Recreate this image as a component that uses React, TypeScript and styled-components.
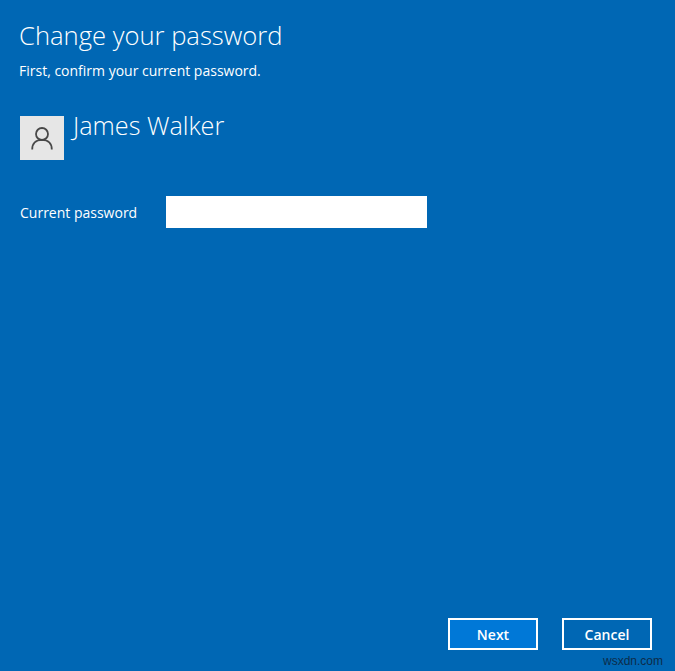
import { createGlobalStyle } from 'styled-components';
import styled from 'styled-components';

const GlobalStyle = createGlobalStyle`
  html, body {
    margin: 0;
    padding: 0;
    background: #0067b4;
  }
`;

export default function App(): JSX.Element {
  return (
    <>
      <GlobalStyle />
      <Page>
        <Title>Change your password</Title>
        <Subtitle>First, confirm your current password.</Subtitle>
        <UserRow>
          <Avatar>
            <svg width="24" height="24" viewBox="0 0 24 24" fill="none" stroke="#484848" strokeWidth="1.8">
              <circle cx="12" cy="8" r="6" />
              <path d="M2.2 23.4c0-5.8 3.6-9.6 9.8-9.6s9.8 3.8 9.8 9.6" />
            </svg>
          </Avatar>
          <UserName>James Walker</UserName>
        </UserRow>
        <FieldRow>
          <FieldLabel>Current password</FieldLabel>
          <PasswordInput type="password" />
        </FieldRow>
        <Footer>
          <ActionButton primary>Next</ActionButton>
          <ActionButton>Cancel</ActionButton>
        </Footer>
        <Watermark>wsxdn.com</Watermark>
      </Page>
    </>
  );
}

const Page = styled.div`
  position: relative;
  box-sizing: border-box;
  width: 675px;
  height: 671px;
  padding: 18px 23px 21px 20px;
  display: flex;
  flex-direction: column;
  overflow: hidden;
  background: #0067b4;
  color: #ffffff;
  font-family: "Open Sans", "Noto Sans", sans-serif;
`;
const Title = styled.h1`
  margin: 0 0 0 -1px;
  height: 36px;
  font-size: 25.6px;
  line-height: 36px;
  font-weight: 300;
  white-space: nowrap;
`;
const Subtitle = styled.p`
  margin: 8px 0 0 -1px;
  height: 18px;
  font-size: 14px;
  line-height: 18px;
  font-weight: 400;
`;
const UserRow = styled.div`
  display: flex;
  align-items: flex-start;
  gap: 9px;
  margin-top: 36px;
`;
const Avatar = styled.div`
  width: 44px;
  height: 44px;
  display: flex;
  align-items: center;
  justify-content: center;
  background: #e6e6e6;
`;
const UserName = styled.div`
  margin-top: -8px;
  font-size: 25.2px;
  line-height: 34px;
  font-weight: 300;
`;
const FieldRow = styled.div`
  display: flex;
  align-items: center;
  margin-top: 36px;
`;
const FieldLabel = styled.label`
  width: 146px;
  padding-top: 2px;
  font-size: 14px;
  line-height: 20px;
`;
const PasswordInput = styled.input`
  box-sizing: border-box;
  width: 261px;
  height: 32px;
  padding: 0 8px;
  border: 0;
  border-radius: 0;
  outline: none;
  background: #ffffff;
`;
const Footer = styled.div`
  display: flex;
  justify-content: flex-end;
  gap: 24px;
  margin-top: auto;
`;
const ActionButton = styled.button<{ primary?: boolean }>`
  box-sizing: border-box;
  width: 90px;
  height: 32px;
  padding: 0;
  border: 2px solid #ffffff;
  border-radius: 0;
  background: ${(p) => (p.primary ? '#0078d7' : 'transparent')};
  color: #ffffff;
  font-family: inherit;
  font-size: 14px;
  font-weight: 600;
`;
const Watermark = styled.span`
  position: absolute;
  right: 12px;
  bottom: 3px;
  color: #0d2c49;
  font-family: "Liberation Sans", sans-serif;
  font-size: 12px;
  line-height: 14px;
`;
